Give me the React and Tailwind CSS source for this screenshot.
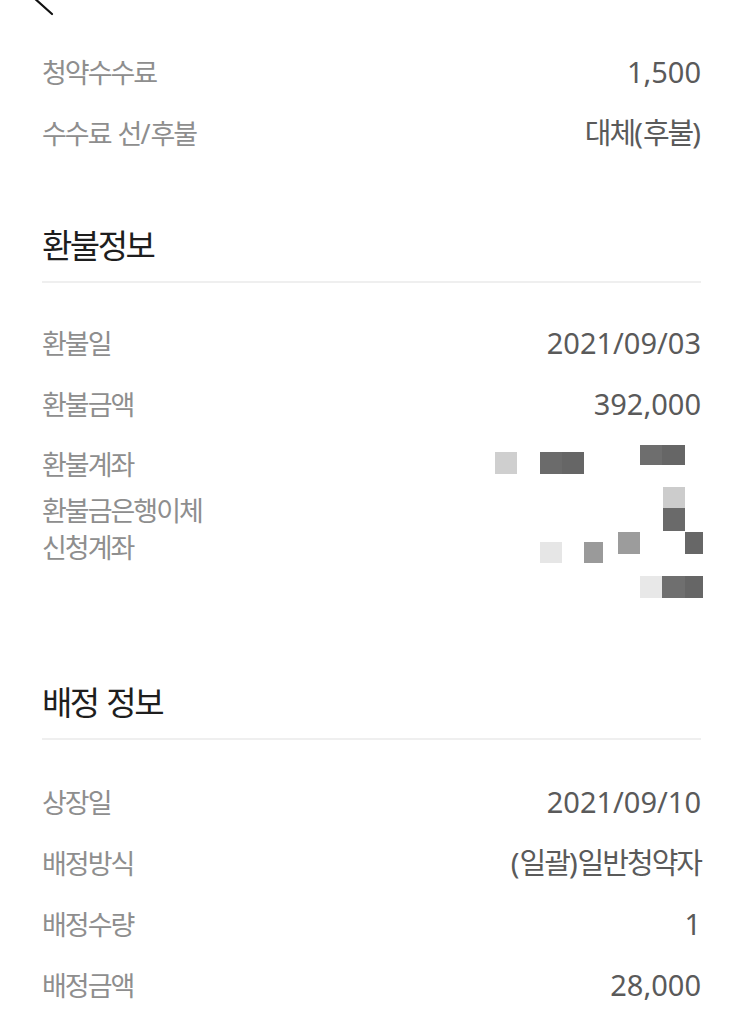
const font = { fontFamily: '"Noto Sans", "Noto Sans CJK KR", sans-serif' }

const refundCells = [
  { x: 453, y: 18, w: 22, h: 22, c: 'bg-[#cfcfcf]' },
  { x: 498, y: 18, w: 22, h: 22, c: 'bg-[#6b6b6b]' },
  { x: 520, y: 18, w: 22, h: 22, c: 'bg-[#666666]' },
  { x: 598, y: 11, w: 22, h: 20, c: 'bg-[#6e6e6e]' },
  { x: 620, y: 11, w: 23, h: 20, c: 'bg-[#666666]' },
  { x: 621, y: 53, w: 22, h: 21, c: 'bg-[#cccccc]' },
  { x: 621, y: 74, w: 22, h: 23, c: 'bg-[#6a6a6a]' },
  { x: 576, y: 98, w: 22, h: 22, c: 'bg-[#9c9c9c]' },
  { x: 643, y: 98, w: 18, h: 22, c: 'bg-[#676767]' },
  { x: 498, y: 108, w: 22, h: 21, c: 'bg-[#e6e6e6]' },
  { x: 542, y: 108, w: 19, h: 21, c: 'bg-[#9a9a9a]' },
  { x: 598, y: 142, w: 22, h: 22, c: 'bg-[#e8e8e8]' },
  { x: 620, y: 142, w: 23, h: 22, c: 'bg-[#6f6f6f]' },
  { x: 643, y: 142, w: 18, h: 22, c: 'bg-[#666666]' },
]

// hangul runs get tighter spacing, punctuation and spaces stay normal
const Tight = ({ children }) => <span className="tracking-[-2px]">{children}</span>
const Plain = ({ children }) => <span className="tracking-normal">{children}</span>

function Row({ label, children }) {
  return (
    <div className="h-[61px] flex items-center justify-between">
      <span className="mt-[4px] text-[27px] text-[#8e8e8e]">{label}</span>
      <span className="text-[29px] text-[#5a5a5a]">{children}</span>
    </div>
  )
}

function Heading({ children }) {
  return (
    <div>
      <div className="h-[40px] flex items-center text-[33px] text-[#1e1e1e]">
        <span className="mt-[2px]">{children}</span>
      </div>
      <div className="mt-[16px] h-[2px] bg-[#efefef]" />
    </div>
  )
}

export default function App() {
  return (
    <div className="min-h-screen bg-white px-[42px] overflow-hidden" style={font}>
      <div className="h-[41px] relative">
        <svg className="absolute left-[-42px] top-0" width="80" height="41" viewBox="0 0 80 41">
          <line x1="33" y1="-3" x2="52" y2="14" stroke="#111" strokeWidth="2.2" strokeLinecap="round" />
        </svg>
      </div>

      <Row label={<Tight>청약수수료</Tight>}>1,500</Row>
      <Row label={<><Tight>수수료</Tight><Plain> </Plain><Tight>선</Tight><Plain>/</Plain><Tight>후불</Tight></>}>
        <Tight>대체</Tight><Plain>(</Plain><Tight>후불</Tight><Plain>)</Plain>
      </Row>

      <div className="mt-[62px]">
        <Heading><span className="tracking-[-2.5px]">환불정보</span></Heading>
      </div>

      <div className="mt-[29px]">
        <Row label={<Tight>환불일</Tight>}>2021/09/03</Row>
        <Row label={<Tight>환불금액</Tight>}>392,000</Row>
        <div className="relative">
          <div className="h-[58px] flex items-center">
            <span className="mt-[4px] text-[27px] tracking-[-2px] text-[#8e8e8e]">환불계좌</span>
          </div>
          <div className="text-[27px] tracking-[-2px] leading-[37px] text-[#8e8e8e]">
            <div>환불금은행이체</div>
            <div>신청계좌</div>
          </div>
          {refundCells.map((cell, i) => (
            <div
              key={i}
              className={`absolute ${cell.c}`}
              style={{ left: cell.x, top: cell.y, width: cell.w, height: cell.h }}
            />
          ))}
        </div>
      </div>

      <div className="mt-[116px]">
        <Heading>
          <span className="tracking-[-2.5px]">배정</span>
          <span> </span>
          <span className="tracking-[-2.5px]">정보</span>
        </Heading>
      </div>

      <div className="mt-[31px]">
        <Row label={<Tight>상장일</Tight>}>2021/09/10</Row>
        <Row label={<Tight>배정방식</Tight>}>
          <Plain>(</Plain><Tight>일괄</Tight><Plain>)</Plain><Tight>일반청약자</Tight>
        </Row>
        <Row label={<Tight>배정수량</Tight>}>1</Row>
        <Row label={<Tight>배정금액</Tight>}>28,000</Row>
      </div>
    </div>
  )
}
